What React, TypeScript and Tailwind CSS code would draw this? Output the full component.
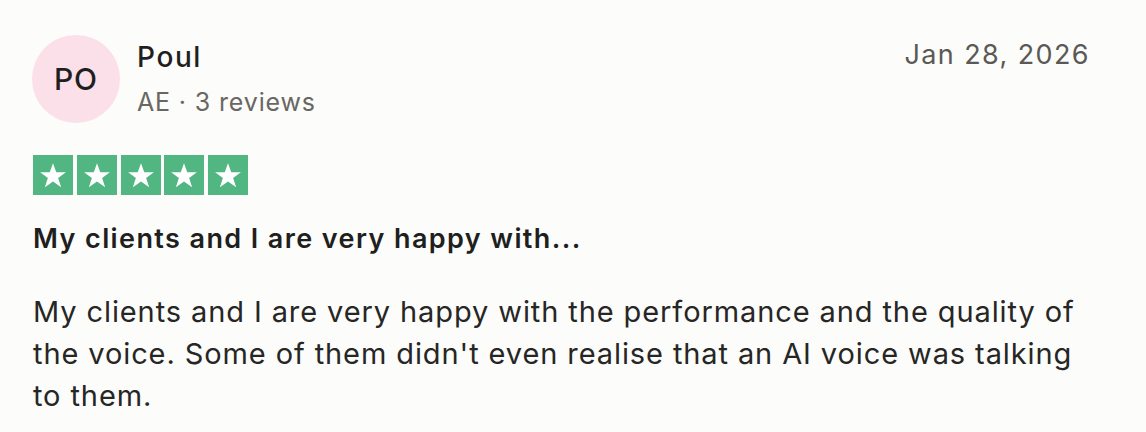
const Star = () => (
  <div className="flex h-10 w-10 items-center justify-center bg-[#52b682]">
    <svg viewBox="0 0 24 24" className="h-[30px] w-[30px]" fill="#ffffff">
      <path d="M12 2.5l2.6 7.3h7.7l-6.2 4.6 2.4 7.4L12 17.2l-6.5 4.6 2.4-7.4-6.2-4.6h7.7z" />
    </svg>
  </div>
);

export default function App() {
  return (
    <div
      className="h-[432px] w-[1146px] bg-[#fcfcfb] px-[33px] pt-[35px] text-[#1f1f1e]"
      style={{ fontFamily: "Inter, 'Noto Sans', sans-serif" }}
    >
      <div className="flex items-start justify-between">
        <div className="flex items-start gap-[17px]">
          <div className="-ml-px flex h-[88px] w-[88px] items-center justify-center rounded-full bg-[#fbe0ea] text-[30px] font-medium tracking-[1px]">
            PO
          </div>
          <div className="flex flex-col pt-[4px]">
            <span className="text-[28px] font-medium leading-[36px] tracking-[1.6px]">Poul</span>
            <span className="mt-[12px] text-[25px] leading-[31px] tracking-[0.85px] text-[#696762]">
              AE · 3 reviews
            </span>
          </div>
        </div>
        <span className="pr-[23px] pt-[2px] text-[27px] leading-[35px] tracking-[1.4px] text-[#5a5955]">
          Jan 28, 2026
        </span>
      </div>

      <div className="mt-[32px] flex gap-[3.75px]">
        <Star />
        <Star />
        <Star />
        <Star />
        <Star />
      </div>

      <h2 className="mt-[27px] text-[27px] font-semibold leading-[34px] tracking-[1.4px]">
        My clients and I are very happy with...
      </h2>

      <p className="mt-[35px] w-[1060px] text-[29px] leading-[42px] tracking-[0.9px] text-[#262624]">
        My clients and I are very happy with the performance and the quality of the voice. Some of them didn't even realise that an AI voice was talking to them.
      </p>
    </div>
  );
}
